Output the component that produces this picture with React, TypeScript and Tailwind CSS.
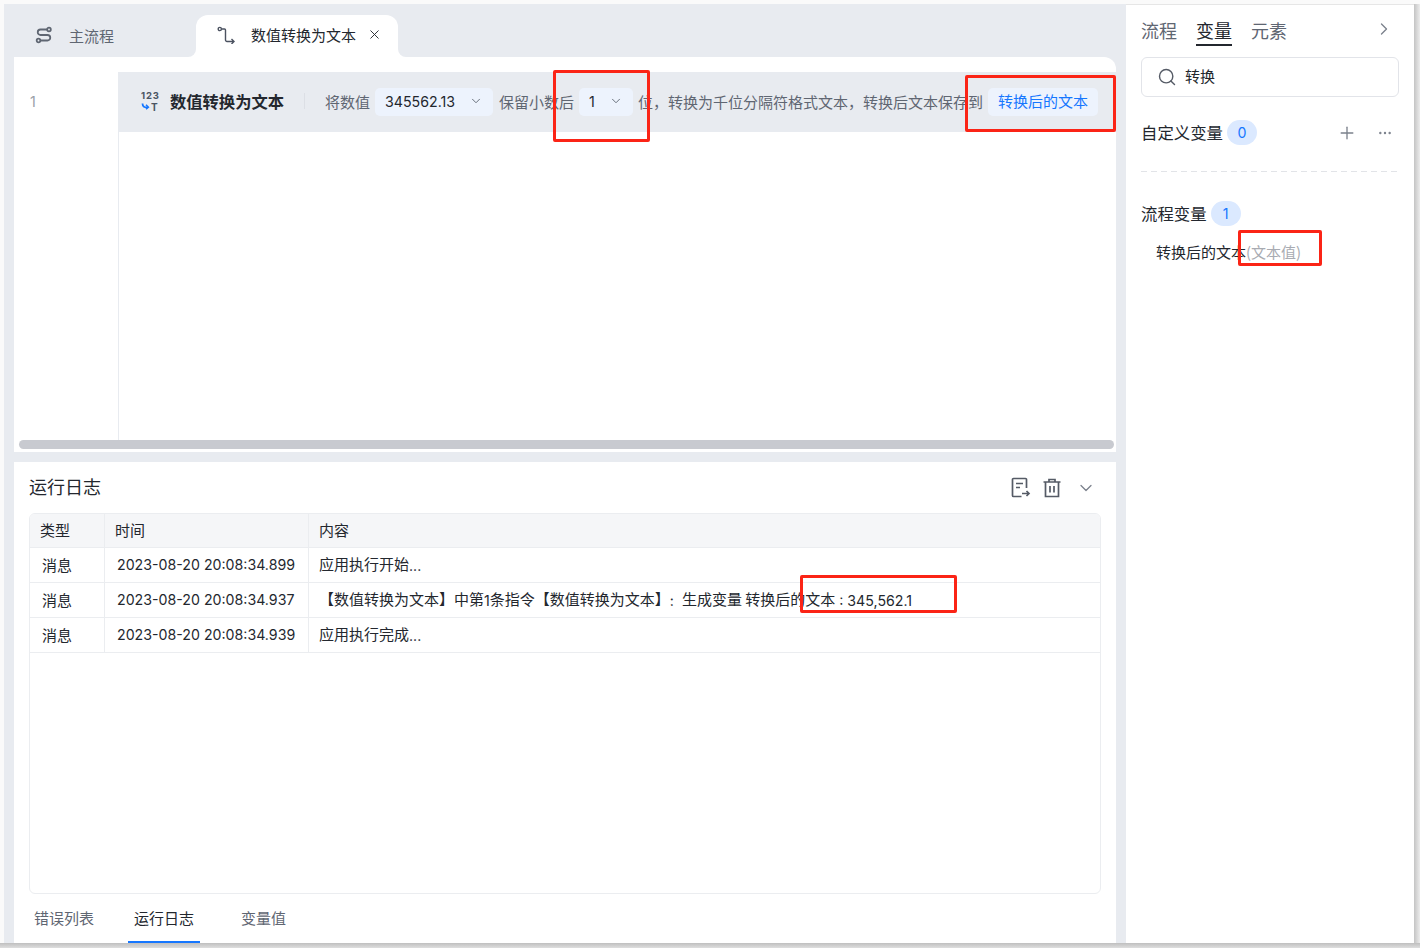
import { ChevronDown, ChevronRight, Ellipsis, Plus, Search, X } from "lucide-react"

const FONT = "font-['Noto_Sans_CJK_SC','Noto_Sans',sans-serif]"

const LOGS = [
  { time: "2023-08-20 20:08:34.899", content: <>应用执行开始<Num>...</Num></> },
  {
    time: "2023-08-20 20:08:34.937",
    content: (
      <>
        【数值转换为文本】中第<Num>1</Num>条指令【数值转换为文本】<Num>{":  "}</Num>生成变量 转换后的文本<Num>{" : 345,562.1"}</Num>
      </>
    ),
  },
  { time: "2023-08-20 20:08:34.939", content: <>应用执行完成<Num>...</Num></> },
]

function Num({ children }: { children: React.ReactNode }) {
  return <span className="inline-block translate-y-px whitespace-pre font-['Inter',sans-serif] text-[14.2px]">{children}</span>
}

function FlowIcon() {
  return (
    <svg width="18" height="18" viewBox="0 0 18 18" fill="none" stroke="#5f6672" strokeWidth="1.8">
      <circle cx="14" cy="3.500" r="1.800" />
      <circle cx="3.500" cy="14.500" r="1.800" />
      <path d="M12.200 3.500H5.500a2.750 2.750 0 0 0 0 5.500h7a2.750 2.750 0 0 1 0 5.500H5.300" />
    </svg>
  )
}

function RouteIcon() {
  return (
    <svg width="18" height="18" viewBox="0 0 18 18" fill="none" stroke="#4b5260" strokeWidth="1.400">
      <circle cx="2.800" cy="3" r="1.600" />
      <path d="M4.400 3H7.500a1 1 0 0 1 1 1v10a1.500 1.500 0 0 0 1.500 1.500h7M14.500 13l2.500 2.500-2.500 2.500" />
    </svg>
  )
}

function ConvertIcon() {
  return (
    <svg width="18" height="20" viewBox="0 0 18 20" fill="none">
      <text x="0" y="8" fontSize="9.500" fontWeight="700" fill="#4b5563" letterSpacing="0.800" fontFamily="Inter, sans-serif">123</text>
      <path d="M1.500 12.500c0 3 2 4.200 5.500 3.700" stroke="#1677ff" strokeWidth="1.800" />
      <path d="M5 13.800l2.400 2.400-2.400 2" stroke="#1677ff" strokeWidth="1.500" />
      <text x="10" y="19.500" fontSize="10" fontWeight="700" fill="#4b5563" fontFamily="Inter, sans-serif">T</text>
    </svg>
  )
}

function ExportIcon() {
  return (
    <svg width="20" height="22" viewBox="0 0 20 22" fill="none" stroke="#555b66" strokeWidth="1.700">
      <path d="M15.500 11V2.500a1 1 0 0 0-1-1H2.500a1 1 0 0 0-1 1v16a1 1 0 0 0 1 1h8" />
      <path d="M5 6.500h7M5 10.500h4" />
      <path d="M11 16.500h7M15.500 14l2.500 2.500-2.500 2.500" />
    </svg>
  )
}

function TrashIcon() {
  return (
    <svg width="18" height="20" viewBox="0 0 18 20" fill="none" stroke="#555b66" strokeWidth="1.700">
      <path d="M0.500 4h17M6 4V1.500h6V4M2.500 4v14.500h13V4M7 8v6.500M11 8v6.500" />
    </svg>
  )
}

function Pick({ children, width }: { children: string; width: string }) {
  return (
    <span className={`mt-[2px] flex h-[28px] items-center justify-between rounded-[5px] bg-[#edf3fd] pb-[2px] pl-[10px] pr-[10px] text-[#23272e] ${width}`}>
      <Num>{children}</Num>
      <ChevronDown size={14} strokeWidth={1.600} className="text-[#5f6672]" />
    </span>
  )
}

function Count({ n }: { n: number }) {
  return (
    <span className="ml-[4px] flex h-[25px] w-[30px] items-center justify-center rounded-full bg-[#dbe9ff] text-[#1677ff]">
      <Num>{n}</Num>
    </span>
  )
}

function Mark({ className }: { className: string }) {
  return <div className={`pointer-events-none absolute rounded-[2px] border-[3px] border-[#fb2416] ${className}`} />
}

export default function App() {
  return (
    <div className={`relative h-[948px] w-[1420px] overflow-hidden bg-[#fafafa] pt-[4px] text-[15px] leading-none text-[#23272e] ${FONT}`}>
      <div className="flex h-[939px]">
        {/* left side: editor + log */}
        <div className="ml-[4px] flex w-[1122px] flex-col bg-[#e8ebf0] pl-[10px] pr-[10px]">
          <div className="flex h-[53px] items-end">
            <div className="flex h-[42px] w-[182px] items-center gap-[16px] pb-[2px] pl-[21px] text-[#5f6672]">
              <FlowIcon />
              <span>主流程</span>
            </div>
            <div className="relative flex h-[42px] w-[202px] items-center rounded-t-[12px] bg-white pb-[3px] pl-[21px]">
              <RouteIcon />
              <span className="ml-[16px]">数值转换为文本</span>
              <X size={15} strokeWidth={1.500} className="ml-[11px]" />
              <div className="absolute bottom-0 left-[-8px] size-[8px] bg-white">
                <div className="size-full rounded-br-[8px] bg-[#e8ebf0]" />
              </div>
              <div className="absolute bottom-0 right-[-8px] size-[8px] bg-white">
                <div className="size-full rounded-bl-[8px] bg-[#e8ebf0]" />
              </div>
            </div>
          </div>

          <div className="flex h-[395px] flex-col rounded-tr-[12px] bg-white">
            <div className="flex min-h-0 flex-1 pt-[15px]">
              <div className="w-[105px] border-r border-[#e8ebf0] pl-[16px] pt-[20px] text-[#9aa0a8]"><Num>1</Num></div>
              <div className="flex-1">
                <div className="flex h-[60px] items-center bg-[#e8ebf0] pb-[2px] pl-[22px] text-[#5f6672]">
                  <ConvertIcon />
                  <span className="ml-[11px] text-[16.300px] font-semibold text-[#23272e]">数值转换为文本</span>
                  <span className="ml-[20px] mr-[20px] h-[16px] w-px bg-[#dcdfe5]" />
                  <span>将数值</span>
                  <span className="ml-[5px]"><Pick width="w-[118px]">345562.13</Pick></span>
                  <span className="ml-[6px]">保留小数后</span>
                  <span className="ml-[5px]"><Pick width="w-[54px]">1</Pick></span>
                  <span className="ml-[5px] whitespace-nowrap">位，转换为千位分隔符格式文本，转换后文本保存到</span>
                  <span className="ml-[5px] mt-[2px] flex h-[28px] w-[110px] items-center justify-center rounded-[5px] bg-[#edf3fd] pb-[4px] text-[#1677ff]">转换后的文本</span>
                </div>
              </div>
            </div>
            <div className="pb-[3px] pl-[5px] pr-[2px]">
              <div className="h-[9px] rounded-full bg-[#c8cad0]" />
            </div>
          </div>

          <div className="mt-[10px] flex flex-1 flex-col bg-white">
            <div className="flex h-[51px] items-center pb-[3px] pl-[15px] pr-[20px]">
              <span className="text-[18px]">运行日志</span>
              <div className="ml-auto flex items-center pt-[4px]">
                <ExportIcon />
                <span className="ml-[12px]"><TrashIcon /></span>
                <ChevronDown size={20} strokeWidth={1.500} className="ml-[15px] text-[#7b818c]" />
              </div>
            </div>
            <div className="mx-[15px] h-[381px] overflow-hidden rounded-[6px] border border-[#ebedf0]">
              <div className="flex h-[34px] items-center border-b border-[#ebedf0] bg-[#f5f6f8]">
                <div className="flex h-full w-[75px] items-center border-r border-[#ebedf0] pb-[3px] pl-[10px]">类型</div>
                <div className="flex h-full w-[204px] items-center border-r border-[#ebedf0] pb-[3px] pl-[10px]">时间</div>
                <div className="pb-[3px] pl-[10px]">内容</div>
              </div>
              {LOGS.map((log) => (
                <div key={log.time} className="flex h-[35px] items-center border-b border-[#ebedf0]">
                  <div className="flex h-full w-[75px] items-center border-r border-[#ebedf0] pb-[1px] pl-[12px]">消息</div>
                  <div className="flex h-full w-[204px] items-center border-r border-[#ebedf0] pb-[1px] pl-[12px]"><Num>{log.time}</Num></div>
                  <div className="pb-[1px] pl-[10px]">{log.content}</div>
                </div>
              ))}
            </div>
            <div className="flex flex-1 pl-[14px] text-[#5f6672]">
              <div className="flex w-[100px] items-center pb-[2px] pl-[6px]">错误列表</div>
              <div className="flex w-[72px] items-center justify-center border-b-[2px] border-[#1677ff] text-[#23272e]">运行日志</div>
              <div className="flex items-center pb-[2px] pl-[41px]">变量值</div>
            </div>
          </div>
        </div>

        {/* right panel */}
        <div className="w-[288px] border-t border-[#e6e6e6] bg-white pl-[15px] pr-[15px]">
          <div className="flex h-[41px] items-end text-[18px] text-[#5f6672]">
            <span className="pb-[7px]">流程</span>
            <span className="ml-[19px] border-b-[2px] border-[#23272e] pb-[5px] text-[#23272e]">变量</span>
            <span className="ml-[19px] pb-[7px]">元素</span>
            <ChevronRight size={20} strokeWidth={1.600} className="mb-[7px] ml-auto mr-[5px] text-[#7b818c]" />
          </div>
          <div className="mt-[11px] flex h-[40px] items-center gap-[8px] rounded-[6px] border border-[#e2e4e9] pb-[1px] pl-[15px]">
            <Search size={20} strokeWidth={1.700} className="text-[#555b66]" />
            <span className="pb-[2px]">转换</span>
          </div>
          <div className="mt-[23px] flex items-center pb-[26px]">
            <span className="text-[16.400px]">自定义变量</span>
            <Count n={0} />
            <Plus size={20} strokeWidth={1.600} className="ml-auto text-[#7b818c]" />
            <Ellipsis size={16} strokeWidth={1.600} className="ml-[20px] mr-[6px] text-[#7b818c]" />
          </div>
          <div className="h-px bg-[repeating-linear-gradient(90deg,#e2e4e8_0,#e2e4e8_6px,transparent_6px,transparent_10px)]" />
          <div className="mt-[29px] flex items-center">
            <span className="text-[16.400px]">流程变量</span>
            <Count n={1} />
          </div>
          <div className="mt-[18px] pl-[15px]">
            转换后的文本<span className="text-[#a8abb2]">(文本值)</span>
          </div>
        </div>

        <div className="w-[6px] bg-linear-to-r from-[#c4c4c4] to-[#ececec]" />
      </div>

      <div className="h-[5px] bg-linear-to-b from-[#bfbfbf] to-[#dedede]" />

      {/* red annotation boxes */}
      <Mark className="left-[553px] top-[70px] h-[72px] w-[97px]" />
      <Mark className="left-[965px] top-[75px] h-[57px] w-[151px]" />
      <Mark className="left-[1238px] top-[230px] h-[36px] w-[84px]" />
      <Mark className="left-[800px] top-[575px] h-[38px] w-[157px]" />
    </div>
  )
}
